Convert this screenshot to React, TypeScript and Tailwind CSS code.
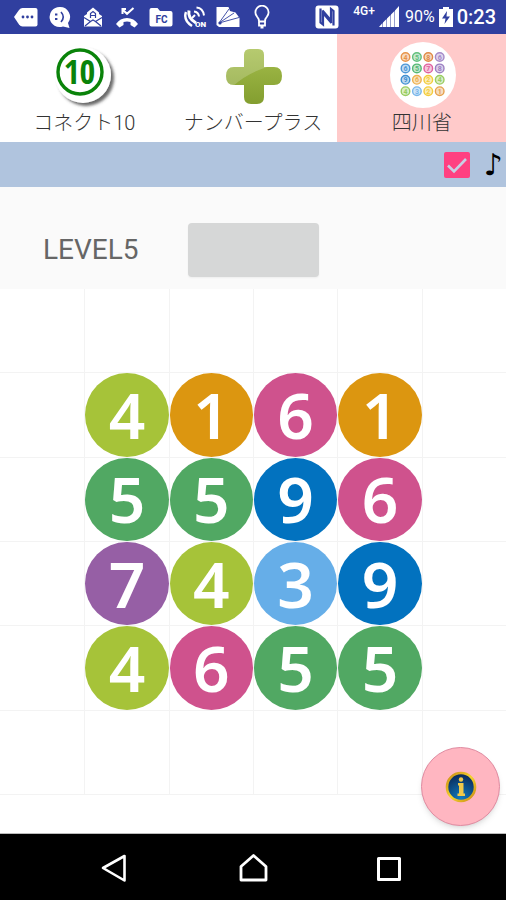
import { useState } from "react";

type TabId = "connect" | "plus" | "shisen";

const TILE_COLORS: Record<number, string> = {
  1: "bg-[#dc9610]", 3: "bg-[#66aee8]", 4: "bg-[#a6c339]", 5: "bg-[#51a863]",
  6: "bg-[#cf528d]", 7: "bg-[#965fa5]", 9: "bg-[#0272bf]",
};

// 0 is an empty cell
const BOARD = [
  [0, 0, 0, 0, 0, 0],
  [0, 4, 1, 6, 1, 0],
  [0, 5, 5, 9, 6, 0],
  [0, 7, 4, 3, 9, 0],
  [0, 4, 6, 5, 5, 0],
  [0, 0, 0, 0, 0, 0],
];

const MINI_DOTS = [
  [["#e8944a", 4], ["#62bf7c", 5], ["#e08a45", 8], ["#a58ac8", 6]],
  [["#4c97d6", 6], ["#55b874", 5], ["#e0609f", 7], ["#9c7fc2", 8]],
  [["#3f8fd2", 9], ["#eeb04e", 6], ["#f3cc3c", 2], ["#98cc60", 4]],
  [["#98cc60", 4], ["#78b6ea", 3], ["#f3cc3c", 2], ["#e6a04c", 1]],
] as [string, number][][];

function StatusIcons() {
  return (
    <div className="flex w-[260px] items-center justify-between text-white">
      <svg className="size-6" viewBox="0 0 24 24" fill="currentColor">
        <path d="M0 12 5 5Q6.500 3 8.500 3H21.500Q23.500 3 23.500 5V19.500Q23.500 21.500 21.500 21.500H8.500Q6.500 21.500 5 19.500Z" />
        <g fill="#303f9f"><circle cx="9" cy="12" r="1.400" /><circle cx="13.500" cy="12" r="1.400" /><circle cx="18" cy="12" r="1.400" /></g>
      </svg>
      <svg className="size-6" viewBox="0 0 24 24" fill="currentColor">
        <path d="M11.500 2a10 10 0 1 0 3.500 19.400L21.500 23 20 18A10 10 0 0 0 11.500 2Z" />
        <g fill="#303f9f"><rect x="7" y="8.500" width="2.400" height="2" /><rect x="7" y="13" width="2.400" height="2" /></g>
        <path d="M13 7q4.500 5 0 10" fill="none" stroke="#303f9f" strokeWidth="1.600" />
      </svg>
      <svg className="size-6" viewBox="0 0 24 24">
        <path d="M3 11 6 9V7.500L12 2.500 18 7.500V9L21 11V21.500H3Z" fill="currentColor" />
        <path d="M3 12.500 9.500 16.500 4 21M21 12.500 14.500 16.500 20 21M9.500 16.500 12 15l2.500 1.500" fill="none" stroke="#303f9f" strokeWidth="1.200" />
        <path d="M9.500 13V8.500L12 6.500l2.500 2V13M9.500 10.500h5" fill="none" stroke="#303f9f" strokeWidth="1.200" />
      </svg>
      <svg className="size-6" viewBox="0 0 24 24" fill="currentColor">
        <path d="M1 19Q5 13 12 13T23 19L19.500 22.500 15.500 20V17Q12 16.200 8.500 17V20L4.500 22.500Z" />
        <path d="M7.500 9V4M6.500 4H11M7.500 4.500 12 8.800 18.500 3" fill="none" stroke="currentColor" strokeWidth="2" />
      </svg>
      <svg className="size-6" viewBox="0 0 24 24" fill="currentColor">
        <path d="M0.500 5Q0.500 3 2.500 3H8.500L11 6H21.500Q23.500 6 23.500 8V19.500Q23.500 21.500 21.500 21.500H2.500Q0.500 21.500 0.500 19.500Z" />
        <text x="12.500" y="17.500" textAnchor="middle" fill="#303f9f" fontSize="10" fontWeight="700" fontFamily="Roboto, sans-serif">FC</text>
      </svg>
      <svg className="size-6" viewBox="0 0 24 24" fill="none" stroke="currentColor">
        <path d="M3 7Q0 15 9 21" strokeWidth="2.400" />
        <path d="M6 5.500Q4.500 13 13 18" strokeWidth="3" />
        <path d="m9 13 3-3M11 6.500q4.500 0.500 5 5M13.500 2.500Q20 3 21 10.500" strokeWidth="2" />
        <text x="17.500" y="21.500" textAnchor="middle" fill="currentColor" stroke="none" fontSize="8" fontWeight="900" fontFamily="Roboto, sans-serif">ON</text>
      </svg>
      <svg className="size-6" viewBox="0 0 24 24" fill="currentColor">
        <path d="M0.500 2H12.500L14 6 19.500 7.500 23.500 13V22H3L0.500 20Z" />
        <path d="m3 18 10-14M3 18 18 8M3 18 23 12.500" stroke="#303f9f" strokeWidth="0.900" />
        <circle cx="4" cy="18" r="1.600" fill="#303f9f" />
      </svg>
      <svg className="size-6" viewBox="0 0 24 24" fill="none" stroke="currentColor" strokeWidth="1.800">
        <path d="M9 16.500Q9 13.500 7.200 11.800A6.600 6.600 0 1 1 16.800 11.800Q15 13.500 15 16.500Z" />
        <path d="M9 17v3.500h6V17M10.500 22.500h3" />
      </svg>
    </div>
  );
}

function StatusBar() {
  return (
    <header className="flex h-[34px] items-center justify-between bg-[#303f9f] pr-[10px] pl-[14px] text-white">
      <StatusIcons />
      <div className="flex items-center">
        <svg className="mr-[14px] size-6" viewBox="0 0 24 24">
          <rect x="0.500" y="0.500" width="23" height="23" rx="3" fill="white" />
          <path d="M5.500 3.500V17.500L8 19.500V8L16.500 18M18.500 20.500V6L16 4V15.500L7.500 5.500" fill="none" stroke="#303f9f" strokeWidth="2.200" />
        </svg>
        <span className="mr-1 mb-3 text-xs leading-3 font-medium">4G+</span>
        <svg className="mr-[6px] h-[22px] w-5" viewBox="0 0 20 22" fill="white">
          <path d="M0 21h3.500v-4zM4 21h3.500v-8L4 16.500zM8 21h3.500V9L8 12.500zM12 21h3.500V5L12 8.500zM16 21h4V0l-4 4.500z" />
        </svg>
        <span className="text-base">90%</span>
        <svg className="mx-1 h-5 w-[14px]" viewBox="0 0 14 20">
          <path d="M0 2h4V0h6v2h4v18H0Z" fill="white" />
          <path d="M8 4 3 11.500h3.500L5.500 17 11 9.500H7.500Z" fill="#303f9f" />
        </svg>
        <span className="text-xl font-medium">0:23</span>
      </div>
    </header>
  );
}

function ConnectIcon() {
  return (
    <svg className="size-[70px]" viewBox="0 0 70 70">
      <defs>
        <filter id="coin" x="-20%" y="-20%" width="150%" height="150%">
          <feDropShadow dx="3" dy="3" stdDeviation="1.800" floodColor="#444" floodOpacity="0.800" />
        </filter>
      </defs>
      <circle cx="34" cy="34" r="28" fill="white" filter="url(#coin)" />
      <circle cx="31" cy="31" r="22" fill="none" stroke="#0a830a" strokeWidth="3.400" />
      <text x="30.500" y="43" textAnchor="middle" fontSize="34" fontWeight="700" fill="#0a830a" fontFamily="'Liberation Sans Narrow', 'Open Sans Condensed', sans-serif">10</text>
    </svg>
  );
}

function PlusIcon() {
  return (
    <svg className="size-[70px]" viewBox="0 0 70 70">
      <defs>
        <linearGradient id="leaf" x1="0" y1="0" x2="0" y2="1">
          <stop offset="0" stopColor="#a9c24f" /><stop offset="1" stopColor="#7f9a2c" />
        </linearGradient>
        <clipPath id="cross">
          <path d="M26 14q0-6 6-6h8q6 0 6 6v12h10q8 0 8 9t-8 9H46v12q0 7-7 7h-6q-7 0-7-7V44H16q-8 0-8-9t8-9h10z" />
        </clipPath>
      </defs>
      <g clipPath="url(#cross)">
        <rect width="70" height="70" fill="url(#leaf)" />
        <path d="M0 0H70V22Q35 26 14 46H0Z" fill="#fff" opacity="0.200" />
      </g>
    </svg>
  );
}

function ShisenIcon() {
  return (
    <svg className="size-[70px]" viewBox="0 0 70 70">
      <circle cx="36" cy="34" r="33" fill="white" />
      {MINI_DOTS.map((row, y) =>
        row.map(([color, n], x) => (
          <g key={`${x}-${y}`}>
            <circle cx={18.5 + x * 11.4} cy={16 + y * 11.4} r="4.300" fill={color} fillOpacity="0.350" stroke={color} strokeWidth="1.400" />
            <text x={18.5 + x * 11.4} y={18.6 + y * 11.4} textAnchor="middle" fontSize="7" fontWeight="700" fill={color} fontFamily="Roboto, sans-serif">{n}</text>
          </g>
        ))
      )}
    </svg>
  );
}

const TABS: { id: TabId; label: string; icon: React.FC }[] = [
  { id: "connect", label: "コネクト10", icon: ConnectIcon },
  { id: "plus", label: "ナンバープラス", icon: PlusIcon },
  { id: "shisen", label: "四川省", icon: ShisenIcon },
];

function NavBar() {
  return (
    <nav className="flex h-[66px] items-center justify-around bg-black px-[46px]">
      <button aria-label="Back">
        <svg className="size-8" viewBox="0 0 32 32" fill="none" stroke="white" strokeWidth="2.600" strokeLinejoin="round">
          <path d="M4 17 25.500 5V29.500Z" />
        </svg>
      </button>
      <button aria-label="Home">
        <svg className="size-8" viewBox="0 0 32 32" fill="none" stroke="white" strokeWidth="2.800" strokeLinejoin="round">
          <path d="M4 29V15.500L16.500 4.500 29 15.500V29Z" />
        </svg>
      </button>
      <button aria-label="Recent apps">
        <svg className="size-8" viewBox="0 0 32 32" fill="none" stroke="white" strokeWidth="3" strokeLinejoin="round">
          <rect x="3.500" y="7.500" width="21" height="21" />
        </svg>
      </button>
    </nav>
  );
}

export default function App() {
  const [tab, setTab] = useState<TabId>("shisen");
  const [sound, setSound] = useState(true);

  return (
    <div className="flex min-h-screen flex-col bg-white font-[Roboto,'Noto_Sans_CJK_JP',sans-serif]">
      <StatusBar />

      {/* Game tabs */}
      <div className="grid h-[108px] grid-cols-3">
        {TABS.map(({ id, label, icon: Icon }) => (
          <button
            key={id}
            onClick={() => setTab(id)}
            className={`flex flex-col items-center pt-[7px] ${tab === id ? "bg-[#ffcaca]" : "bg-white"}`}
          >
            <Icon />
            <span className="text-xl leading-6 font-light whitespace-nowrap text-[#333]">{label}</span>
          </button>
        ))}
      </div>

      {/* Sound toggle */}
      <div className="flex h-[45px] items-center justify-end bg-[#b0c4de] pr-[3px]">
        <label className="flex items-center gap-[14px]">
          <span className="grid size-[26px] place-items-center">
            <input
              type="checkbox"
              checked={sound}
              onChange={(e) => setSound(e.target.checked)}
              className="col-start-1 row-start-1 size-[26px] appearance-none rounded-xs border-2 border-[#ff4081] checked:bg-[#ff4081]"
            />
            {sound && (
              <svg className="pointer-events-none col-start-1 row-start-1 size-[26px]" viewBox="0 0 26 26" fill="none" stroke="#c8cfe4" strokeWidth="2.600">
                <path d="m4 13.500 6 6L22 7" />
              </svg>
            )}
          </span>
          <span className="font-['DejaVu_Sans',sans-serif] text-3xl leading-8 text-black">♪</span>
        </label>
      </div>

      {/* Level */}
      <div className="flex items-center bg-[#fafafa] pt-9 pb-3 pl-[43px]">
        <span className="w-[145px] text-[28px] text-[#666]">LEVEL5</span>
        <button aria-label="Start" className="h-[54px] w-[131px] rounded-sm bg-[#d6d7d7] shadow-xs" />
      </div>

      <main className="relative flex-1 border-b border-[#bbb] pb-9">
        <div className="grid grid-cols-6">
          {BOARD.flat().map((n, i) => (
            <div key={i} className={`aspect-square border-b border-[#f3f3f3] ${i % 6 > 0 ? "border-l" : ""}`}>
              {n > 0 && (
                <button className={`flex size-full items-center justify-center rounded-full font-['Noto_Sans',sans-serif] text-[64px] leading-none font-semibold text-white ${TILE_COLORS[n]}`}>
                  {n}
                </button>
              )}
            </div>
          ))}
        </div>
        <button
          aria-label="Info"
          className="absolute right-[6px] bottom-[7px] flex size-[79px] items-center justify-center rounded-full border border-[#e08aa0] bg-[#ffb6c1] shadow-md"
        >
          <svg className="size-8" viewBox="0 0 32 32">
            <defs>
              <radialGradient id="blue" cx="0.500" cy="0.900" r="0.900">
                <stop offset="0" stopColor="#0f7cc0" /><stop offset="1" stopColor="#0a2554" />
              </radialGradient>
              <linearGradient id="gold" x1="0" y1="0" x2="1" y2="1">
                <stop offset="0" stopColor="#c98a12" /><stop offset="0.500" stopColor="#f4d330" /><stop offset="1" stopColor="#c98a12" />
              </linearGradient>
            </defs>
            <circle cx="16" cy="16" r="14" fill="url(#blue)" stroke="url(#gold)" strokeWidth="2.600" />
            <circle cx="16" cy="8.500" r="2.200" fill="#efc94a" />
            <path d="M13 12h5.500V22.500H20v2.500h-7.500v-2.500H14V14.500h-1z" fill="#efc94a" />
          </svg>
        </button>
      </main>

      <NavBar />
    </div>
  );
}
